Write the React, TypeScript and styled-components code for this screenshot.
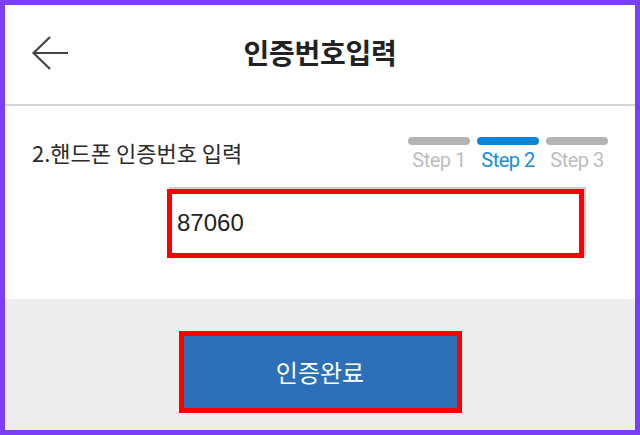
import React, { useState } from "react";
import styled, { createGlobalStyle } from "styled-components";

const GlobalStyle = createGlobalStyle`
  html, body {
    margin: 0;
    padding: 0;
    background: #fff;
  }
  * {
    box-sizing: border-box;
  }
`;

const Frame = styled.div`
  width: 640px;
  height: 435px;
  border: 5px solid #7a3ff7;
  display: flex;
  flex-direction: column;
  background: #fff;
  font-family: "Noto Sans CJK KR", "Noto Sans", sans-serif;
  overflow: hidden;
`;

const Header = styled.header`
  height: 101px;
  flex-shrink: 0;
  display: flex;
  align-items: center;
  justify-content: center;
  position: relative;
  border-bottom: 2px solid #d2d2d2;
`;

const BackButton = styled.button`
  position: absolute;
  left: 21px;
  top: 27px;
  width: 42px;
  height: 42px;
  padding: 0;
  border: none;
  background: none;
  cursor: pointer;
  display: flex;
  align-items: center;
  justify-content: center;
`;

const Title = styled.h1`
  margin: 0 0 6px 0;
  font-size: 28px;
  font-weight: 700;
  color: #222;
  letter-spacing: -0.3px;
`;

const Content = styled.section`
  height: 193px;
  flex-shrink: 0;
  padding: 31px 27px 0 27px;
`;

const TopRow = styled.div`
  display: flex;
  justify-content: space-between;
  align-items: flex-start;
`;

const Subtitle = styled.h2`
  margin: 2px 0 0 0;
  font-size: 22px;
  line-height: 26px;
  font-weight: 400;
  color: #2a2a2a;
  letter-spacing: 0;
`;

const Steps = styled.div`
  display: flex;
  gap: 7px;
`;

const Step = styled.div`
  width: 62px;
  display: flex;
  flex-direction: column;
  align-items: center;
`;

const StepBar = styled.div<{ $active: boolean }>`
  width: 100%;
  height: 8px;
  border-radius: 4px;
  background: ${(p) => (p.$active ? "#0a86d8" : "#b4b4b4")};
`;

const StepLabel = styled.span<{ $active: boolean }>`
  margin-top: 5px;
  font-family: Roboto, "Noto Sans", sans-serif;
  font-size: 20px;
  line-height: 20px;
  letter-spacing: -0.5px;
  color: ${(p) => (p.$active ? "#1a8bd9" : "#bdbdbd")};
`;

const InputRow = styled.div`
  margin-top: 19px;
  padding-left: 135px;
  padding-right: 24px;
`;

const CodeInput = styled.input`
  display: block;
  width: 417px;
  height: 69px;
  border: 5px solid #ff0000;
  box-shadow: 2px -2px 0 #cccccc;
  padding: 0 0 2px 5px;
  font-family: "Liberation Sans", Arial, sans-serif;
  font-size: 24px;
  color: #222;
  background: #fff;
  outline: none;
`;

const Footer = styled.footer`
  flex: 1;
  background: #ededed;
  display: flex;
  justify-content: center;
  padding-top: 32px;
`;

const SubmitButton = styled.button`
  width: 283px;
  height: 82px;
  border: 5px solid #ff0000;
  background: #2e70b8;
  color: #fff;
  font-family: "Noto Sans CJK KR", "Noto Sans", sans-serif;
  font-size: 24px;
  font-weight: 400;
  cursor: pointer;
  padding: 0 0 2px 0;
`;

const steps = ["Step 1", "Step 2", "Step 3"];

const App: React.FC = () => {
  const [code, setCode] = useState("87060");
  const current = 1;

  return (
    <>
      <GlobalStyle />
      <Frame>
        <Header>
          <BackButton aria-label="뒤로">
            <svg width="42" height="42" viewBox="0 0 42 42" fill="none">
              <path
                d="M44 21H7.5M24 5L7.5 21L24 37"
                stroke="#444"
                strokeWidth="2.2"
              />
            </svg>
          </BackButton>
          <Title>인증번호입력</Title>
        </Header>
        <Content>
          <TopRow>
            <Subtitle>2.핸드폰 인증번호 입력</Subtitle>
            <Steps>
              {steps.map((label, i) => (
                <Step key={label}>
                  <StepBar $active={i === current} />
                  <StepLabel $active={i === current}>{label}</StepLabel>
                </Step>
              ))}
            </Steps>
          </TopRow>
          <InputRow>
            <CodeInput
              value={code}
              onChange={(e) => setCode(e.target.value)}
              inputMode="numeric"
            />
          </InputRow>
        </Content>
        <Footer>
          <SubmitButton>인증완료</SubmitButton>
        </Footer>
      </Frame>
    </>
  );
};

export default App;
